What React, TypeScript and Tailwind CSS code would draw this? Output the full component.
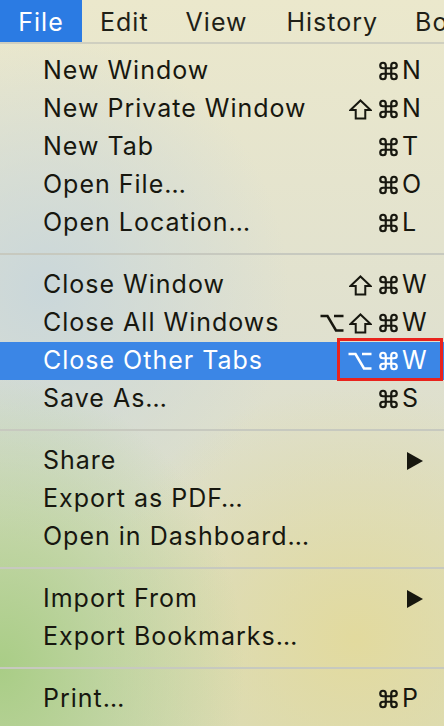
import React from "react";

type Item =
  | { kind: "item"; label: string; mods?: string; key?: string; sub?: boolean; active?: boolean }
  | { kind: "sep" };

const items: Item[] = [
  { kind: "item", label: "New Window", mods: "c", key: "N" },
  { kind: "item", label: "New Private Window", mods: "sc", key: "N" },
  { kind: "item", label: "New Tab", mods: "c", key: "T" },
  { kind: "item", label: "Open File…", mods: "c", key: "O" },
  { kind: "item", label: "Open Location…", mods: "c", key: "L" },
  { kind: "sep" },
  { kind: "item", label: "Close Window", mods: "sc", key: "W" },
  { kind: "item", label: "Close All Windows", mods: "osc", key: "W" },
  { kind: "item", label: "Close Other Tabs", mods: "oc", key: "W", active: true },
  { kind: "item", label: "Save As…", mods: "c", key: "S" },
  { kind: "sep" },
  { kind: "item", label: "Share", sub: true },
  { kind: "item", label: "Export as PDF…" },
  { kind: "item", label: "Open in Dashboard…" },
  { kind: "sep" },
  { kind: "item", label: "Import From", sub: true },
  { kind: "item", label: "Export Bookmarks…" },
  { kind: "sep" },
  { kind: "item", label: "Print…", mods: "c", key: "P" },
];

function Cmd() {
  return (
    <svg width="23" height="22" viewBox="0 0 24 24" fill="none" stroke="currentColor" strokeWidth="2.4" strokeLinecap="round" strokeLinejoin="round">
      <path d="M15 6v12a3 3 0 1 0 3-3H6a3 3 0 1 0 3 3V6a3 3 0 1 0-3 3h12a3 3 0 1 0-3-3" />
    </svg>
  );
}

function Shift() {
  return (
    <svg width="23" height="21" viewBox="0 0 24 22" fill="none" stroke="currentColor" strokeWidth="2.1" strokeLinejoin="miter">
      <polygon points="12,1.5 22.5,11.5 17,11.5 17,20.5 7,20.5 7,11.5 1.5,11.5" />
    </svg>
  );
}

function Opt() {
  return (
    <svg width="24" height="20" viewBox="0 0 24 20" fill="none" stroke="currentColor" strokeWidth="2.5" strokeLinecap="butt">
      <path d="M0.5 3h7l8.5 14.5h7.5M14 3h9.5" />
    </svg>
  );
}

export default function App() {
  return (
    <div className="w-[444px] h-[726px] overflow-hidden relative font-['Inter',sans-serif] text-[#17170f] bg-[radial-gradient(ellipse_55%_40%_at_0%_92%,#a9cd86_0%,rgba(169,205,134,0)_100%),radial-gradient(ellipse_60%_35%_at_80%_88%,#e2da9e_0%,rgba(226,218,158,0)_100%),radial-gradient(ellipse_55%_35%_at_10%_40%,#cad7da_0%,rgba(202,215,218,0)_100%),linear-gradient(180deg,#ebe8cc_0%,#dfe0cf_50%,#d9dcc0_100%)]">
      {/* Menu bar */}
      <div className="h-[44px] flex items-stretch overflow-hidden border-b-[2px] border-[#cfcfc0] text-[25px] tracking-[1px] text-[#1f1f17] whitespace-nowrap">
        <div className="shrink-0 bg-[#2b7be3] text-white w-[82px] flex items-center justify-center pt-[3px]">
          File
        </div>
        <div className="shrink-0 flex items-center pl-[18px] pt-[3px]">Edit</div>
        <div className="shrink-0 flex items-center pl-[37px] pt-[3px]">View</div>
        <div className="shrink-0 flex items-center pl-[39px] pt-[3px]">History</div>
        <div className="shrink-0 flex items-center pl-[37px] pt-[3px]">Bo</div>
      </div>
      <div className="pt-[8px]">
        {items.map((it, i) =>
          it.kind === "sep" ? (
            <div key={i} className="h-[24px] flex items-center">
              <div className="h-[2px] w-full bg-[#c7c9bf]" />
            </div>
          ) : (
            <div
              key={i}
              className={
                "relative h-[38px] flex items-center pl-[43px] pr-[8px] text-[25px] tracking-[1px] " +
                (it.active ? "bg-[#3b86e6] text-white" : "")
              }
            >
              <span className="flex-1">{it.label}</span>
              <span className="flex items-center gap-[5px] pr-[2px]">
                {it.mods?.includes("o") && <Opt />}
                {it.mods?.includes("s") && <Shift />}
                {it.mods?.includes("c") && <Cmd />}
              </span>
              <span className="w-[34px] flex items-center tracking-normal">
                {it.key && <span>{it.key}</span>}
                {it.sub && (
                  <svg width="18" height="18" viewBox="0 0 18 18" className="ml-[4px]">
                    <polygon points="1,0 17,9 1,18" fill="#17170f" />
                  </svg>
                )}
              </span>
              {it.active && (
                <div className="absolute left-[337px] top-[-4px] w-[106px] h-[43px] border-[3px] border-[#e8231d]" />
              )}
            </div>
          )
        )}
      </div>
    </div>
  );
}
